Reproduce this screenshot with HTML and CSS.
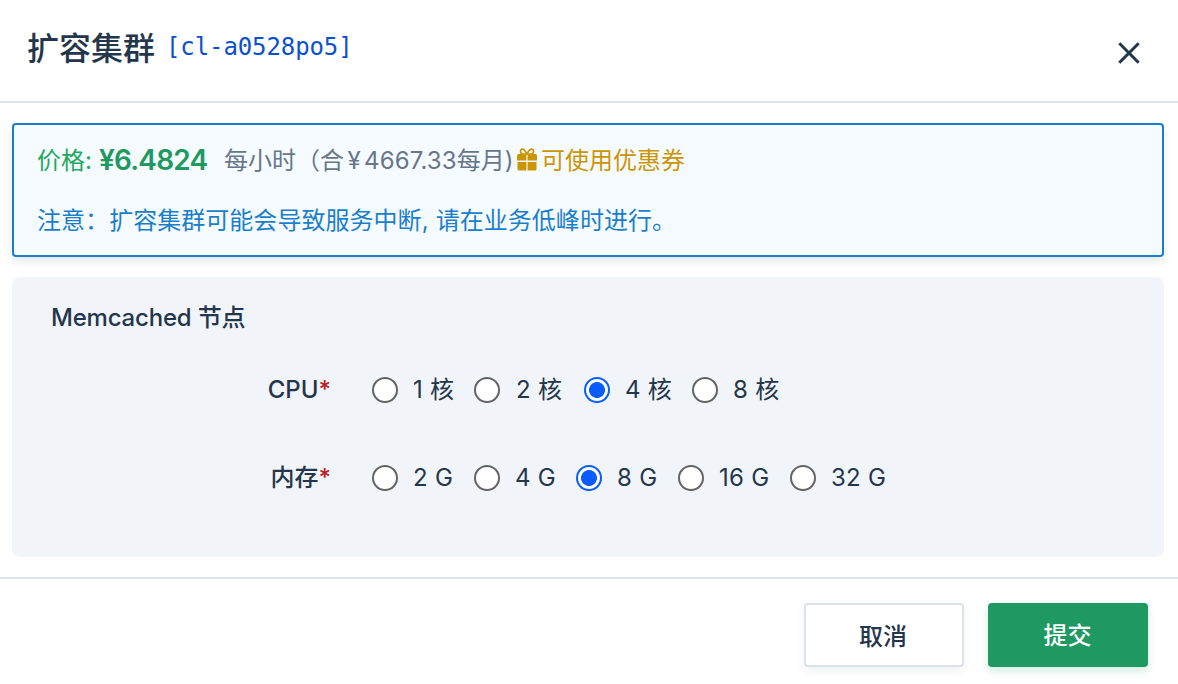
FILE: index.html
```html
<!DOCTYPE html>
<html lang="zh-CN">
<head>
<meta charset="utf-8">
<title>扩容集群</title>
<link rel="stylesheet" href="styles.css">
</head>
<body>
<div class="modal">
  <header class="header">
    <div class="heading"><h1 class="title">扩容集群</h1><span class="cluster-id">[cl-a0528po5]</span></div>
    <button class="close" aria-label="关闭"><svg width="24" height="24" viewBox="0 0 24 24"><path d="M2.3 2.3 21.7 21.7M21.7 2.3 2.3 21.7" fill="none" stroke="currentColor" stroke-width="3"/></svg></button>
  </header>
  <main class="body">
    <section class="notice">
      <div class="price-row">
        <span class="price-label">价格:</span>
        <span class="price">¥6.4824</span>
        <span class="period"><span>每小时（合</span><span class="yen">¥</span><span class="monthly">4667.33</span><span>每月)</span></span>
        <svg class="gift" width="20" height="23" viewBox="0 0 20 23"><path fill="currentColor" d="M1.500 6h17q1.500 0 1.500 1.500v5h-9.400V6H9.400v6.500H0v-5Q0 6 1.500 6ZM.5 14h8.900v8.500H2Q.5 22.500.5 21v-7ZM10.600 14h8.900v7q0 1.500-1.500 1.500h-7.400Z"/><path fill="none" stroke="currentColor" stroke-width="1.700" d="M10 6.500C8.500 3 6.800.9 5.100 1.200 2.800 1.600 3 5.400 5.300 6H10C11.500 3 13.200.9 14.900 1.200c2.300.4 2.100 4.200-.2 4.800H10"/></svg>
        <span class="coupon">可使用优惠券</span>
      </div>
      <p class="warning"><span class="warning-label">注意：</span>扩容集群可能会导致服务中断<span class="comma">,</span>请在业务低峰时进行。</p>
    </section>
    <section class="panel">
      <h2 class="panel-title">Memcached <span class="cjk">节点</span></h2>
      <div class="field cpu">
        <div class="label">CPU<span class="required">*</span></div>
        <div class="options">
          <label class="option one"><input type="radio" name="cpu"><span>1 核</span></label>
          <label class="option two"><input type="radio" name="cpu"><span>2 核</span></label>
          <label class="option"><input type="radio" name="cpu" checked><span>4 核</span></label>
          <label class="option"><input type="radio" name="cpu"><span>8 核</span></label>
        </div>
      </div>
      <div class="field memory">
        <div class="label">内存<span class="required">*</span></div>
        <div class="options">
          <label class="option"><input type="radio" name="mem"><span>2 G</span></label>
          <label class="option"><input type="radio" name="mem"><span>4 G</span></label>
          <label class="option"><input type="radio" name="mem" checked><span>8 G</span></label>
          <label class="option wide"><input type="radio" name="mem"><span>16 G</span></label>
          <label class="option wide"><input type="radio" name="mem"><span>32 G</span></label>
        </div>
      </div>
    </section>
  </main>
  <footer class="footer">
    <button class="button cancel">取消</button>
    <button class="button submit">提交</button>
  </footer>
</div>
</body>
</html>
```
FILE: styles.css
```css
* { box-sizing: border-box; }
body {
  margin: 0;
  background: #fff;
  color: #24364b;
  font-family: Inter, "Noto Sans CJK SC", sans-serif;
  font-size: 24px;
}
h1, h2, p { margin: 0; }
button { padding: 0; border: 0; font: inherit; color: inherit; }
.modal { width: 1178px; height: 684px; display: flex; flex-direction: column; overflow: hidden; }
.header {
  height: 103px;
  border-bottom: 2px solid #dae4ec;
  padding: 0 37px 0 27px;
  display: flex;
  justify-content: space-between;
  align-items: flex-start;
}
.heading { display: flex; padding-top: 24px; line-height: 48px; }
.title { font-size: 32px; font-weight: 500; line-height: 50px; }
.cluster-id {
  margin-left: 11px;
  font-family: "DejaVu Sans Mono", monospace;
  font-size: 24px;
  line-height: 46px;
  letter-spacing: -.1px;
  color: #0b50d0;
}
.close { width: 24px; height: 24px; margin-top: 41px; background: none; }
.close svg { display: block; }
.body { height: 474px; padding: 20px 14px 0 12px; }
.notice {
  height: 134px;
  border: 2px solid #1a7fca;
  border-radius: 4px;
  background: #f6fbff;
  box-shadow: 0 4px 8px rgba(36, 54, 75, .12);
  padding: 16px 23px;
}
.price-row { display: flex; height: 40px; line-height: 40px; white-space: nowrap; }
.price-label { color: #22a861; width: 62px; }
.price { font-size: 28px; font-weight: 600; letter-spacing: -.8px; color: #1d9961; width: 125px; line-height: 38px; }
.period { color: #67768a; display: flex; width: 293px; }
.yen { width: 20px; text-align: center; }
.monthly { letter-spacing: .15px; }
.gift { color: #cb9606; margin: 7px 4px 0 0; }
.coupon { color: #cb9606; }
.warning { margin-top: 20px; line-height: 40px; color: #1a7fca; letter-spacing: .04px; }
.comma { display: inline-block; width: 14px; }
.panel {
  height: 280px;
  margin-top: 20px;
  border-radius: 8px;
  background: #f1f5f9;
  padding: 20px 39px;
}
.panel-title { font-size: 24px; font-weight: 500; line-height: 41px; height: 40px; letter-spacing: -.2px; }
.field { display: flex; height: 40px; line-height: 41px; }
.cpu { margin-top: 32px; }
.memory { margin-top: 48px; }
.label { width: 280px; text-align: right; font-weight: 500; }
.required { color: #bd2025; }
.options { display: flex; margin-left: 41px; }
.option { display: flex; width: 108px; white-space: nowrap; letter-spacing: .3px; }
.option.one, .memory .option { width: 102px; }
.option.two { width: 110px; }
.option.two input { margin-right: 16px; }
.memory .option.wide { width: 112px; }
.option input {
  appearance: none;
  flex: none;
  width: 26px;
  height: 26px;
  margin: 8px 15px 0 0;
  border: 2px solid #646464;
  border-radius: 50%;
  background: #fff;
}
.option input:checked {
  border-color: #0b5cff;
  background: radial-gradient(circle, #0b5cff 7.600px, #fff 8.300px);
}
.footer {
  height: 107px;
  border-top: 2px solid #dae4ec;
  padding: 24px 30px 0 0;
  display: flex;
  justify-content: flex-end;
  gap: 24px;
}
.button { width: 160px; height: 64px; border-radius: 4px; font-size: 24px; font-weight: 500; }
.cancel { padding: 0 2px 2px 0; background: #fff; border: 2px solid #dae4ec; box-shadow: 0 4px 8px rgba(36, 54, 75, .07); }
.submit { padding: 0 1px 4px 0; background: #1d9961; color: #fff; box-shadow: 0 4px 8px rgba(29, 153, 97, .2); }
```
